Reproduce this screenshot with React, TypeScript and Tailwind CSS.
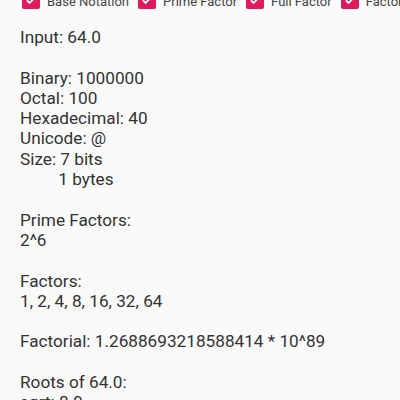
import React from "react";

function Check() {
  return (
    <div className="w-[18px] h-[18px] rounded-[2px] bg-[#e0195c] flex items-center justify-center shrink-0">
      <svg width="14" height="14" viewBox="0 0 24 24">
        <path d="M5 12.5l4.5 4.5L19 7.5" fill="none" stroke="white" strokeWidth="3.2" />
      </svg>
    </div>
  );
}

const lines = [
  "Input: 64.0",
  "",
  "Binary: 1000000",
  "Octal: 100",
  "Hexadecimal: 40",
  "Unicode: @",
  "Size: 7 bits",
  "         1 bytes",
  "",
  "Prime Factors:",
  "2^6",
  "",
  "Factors:",
  "1, 2, 4, 8, 16, 32, 64",
  "",
  "Factorial: 1.2688693218588414 * 10^89",
  "",
  "Roots of 64.0:",
  "sqrt: 8.0",
];

export default function App() {
  return (
    <div className="w-[400px] h-[400px] overflow-hidden bg-[#fafafa] text-[#333333]" style={{ fontFamily: "Roboto, sans-serif" }}>
      <div className="flex items-center h-[18px] mt-[-9px] pl-[22px] whitespace-nowrap text-[13px] leading-[18px] text-[#444444]">
        <Check />
        <span className="ml-[7px] mr-[9px] translate-y-[1.5px]">Base Notation</span>
        <Check />
        <span className="ml-[7px] mr-[9px] translate-y-[1.5px]">Prime Factor</span>
        <Check />
        <span className="ml-[7px] mr-[9px] translate-y-[1.5px]">Full Factor</span>
        <Check />
        <span className="ml-[7px] translate-y-[1.5px]">Factorial</span>
      </div>
      <div className="pl-[20px] pt-[18px] text-[17.2px] leading-[20.3px] whitespace-pre">
        {lines.map((l, i) => (
          <div key={i} className="h-[20.3px]">{l}</div>
        ))}
      </div>
    </div>
  );
}
